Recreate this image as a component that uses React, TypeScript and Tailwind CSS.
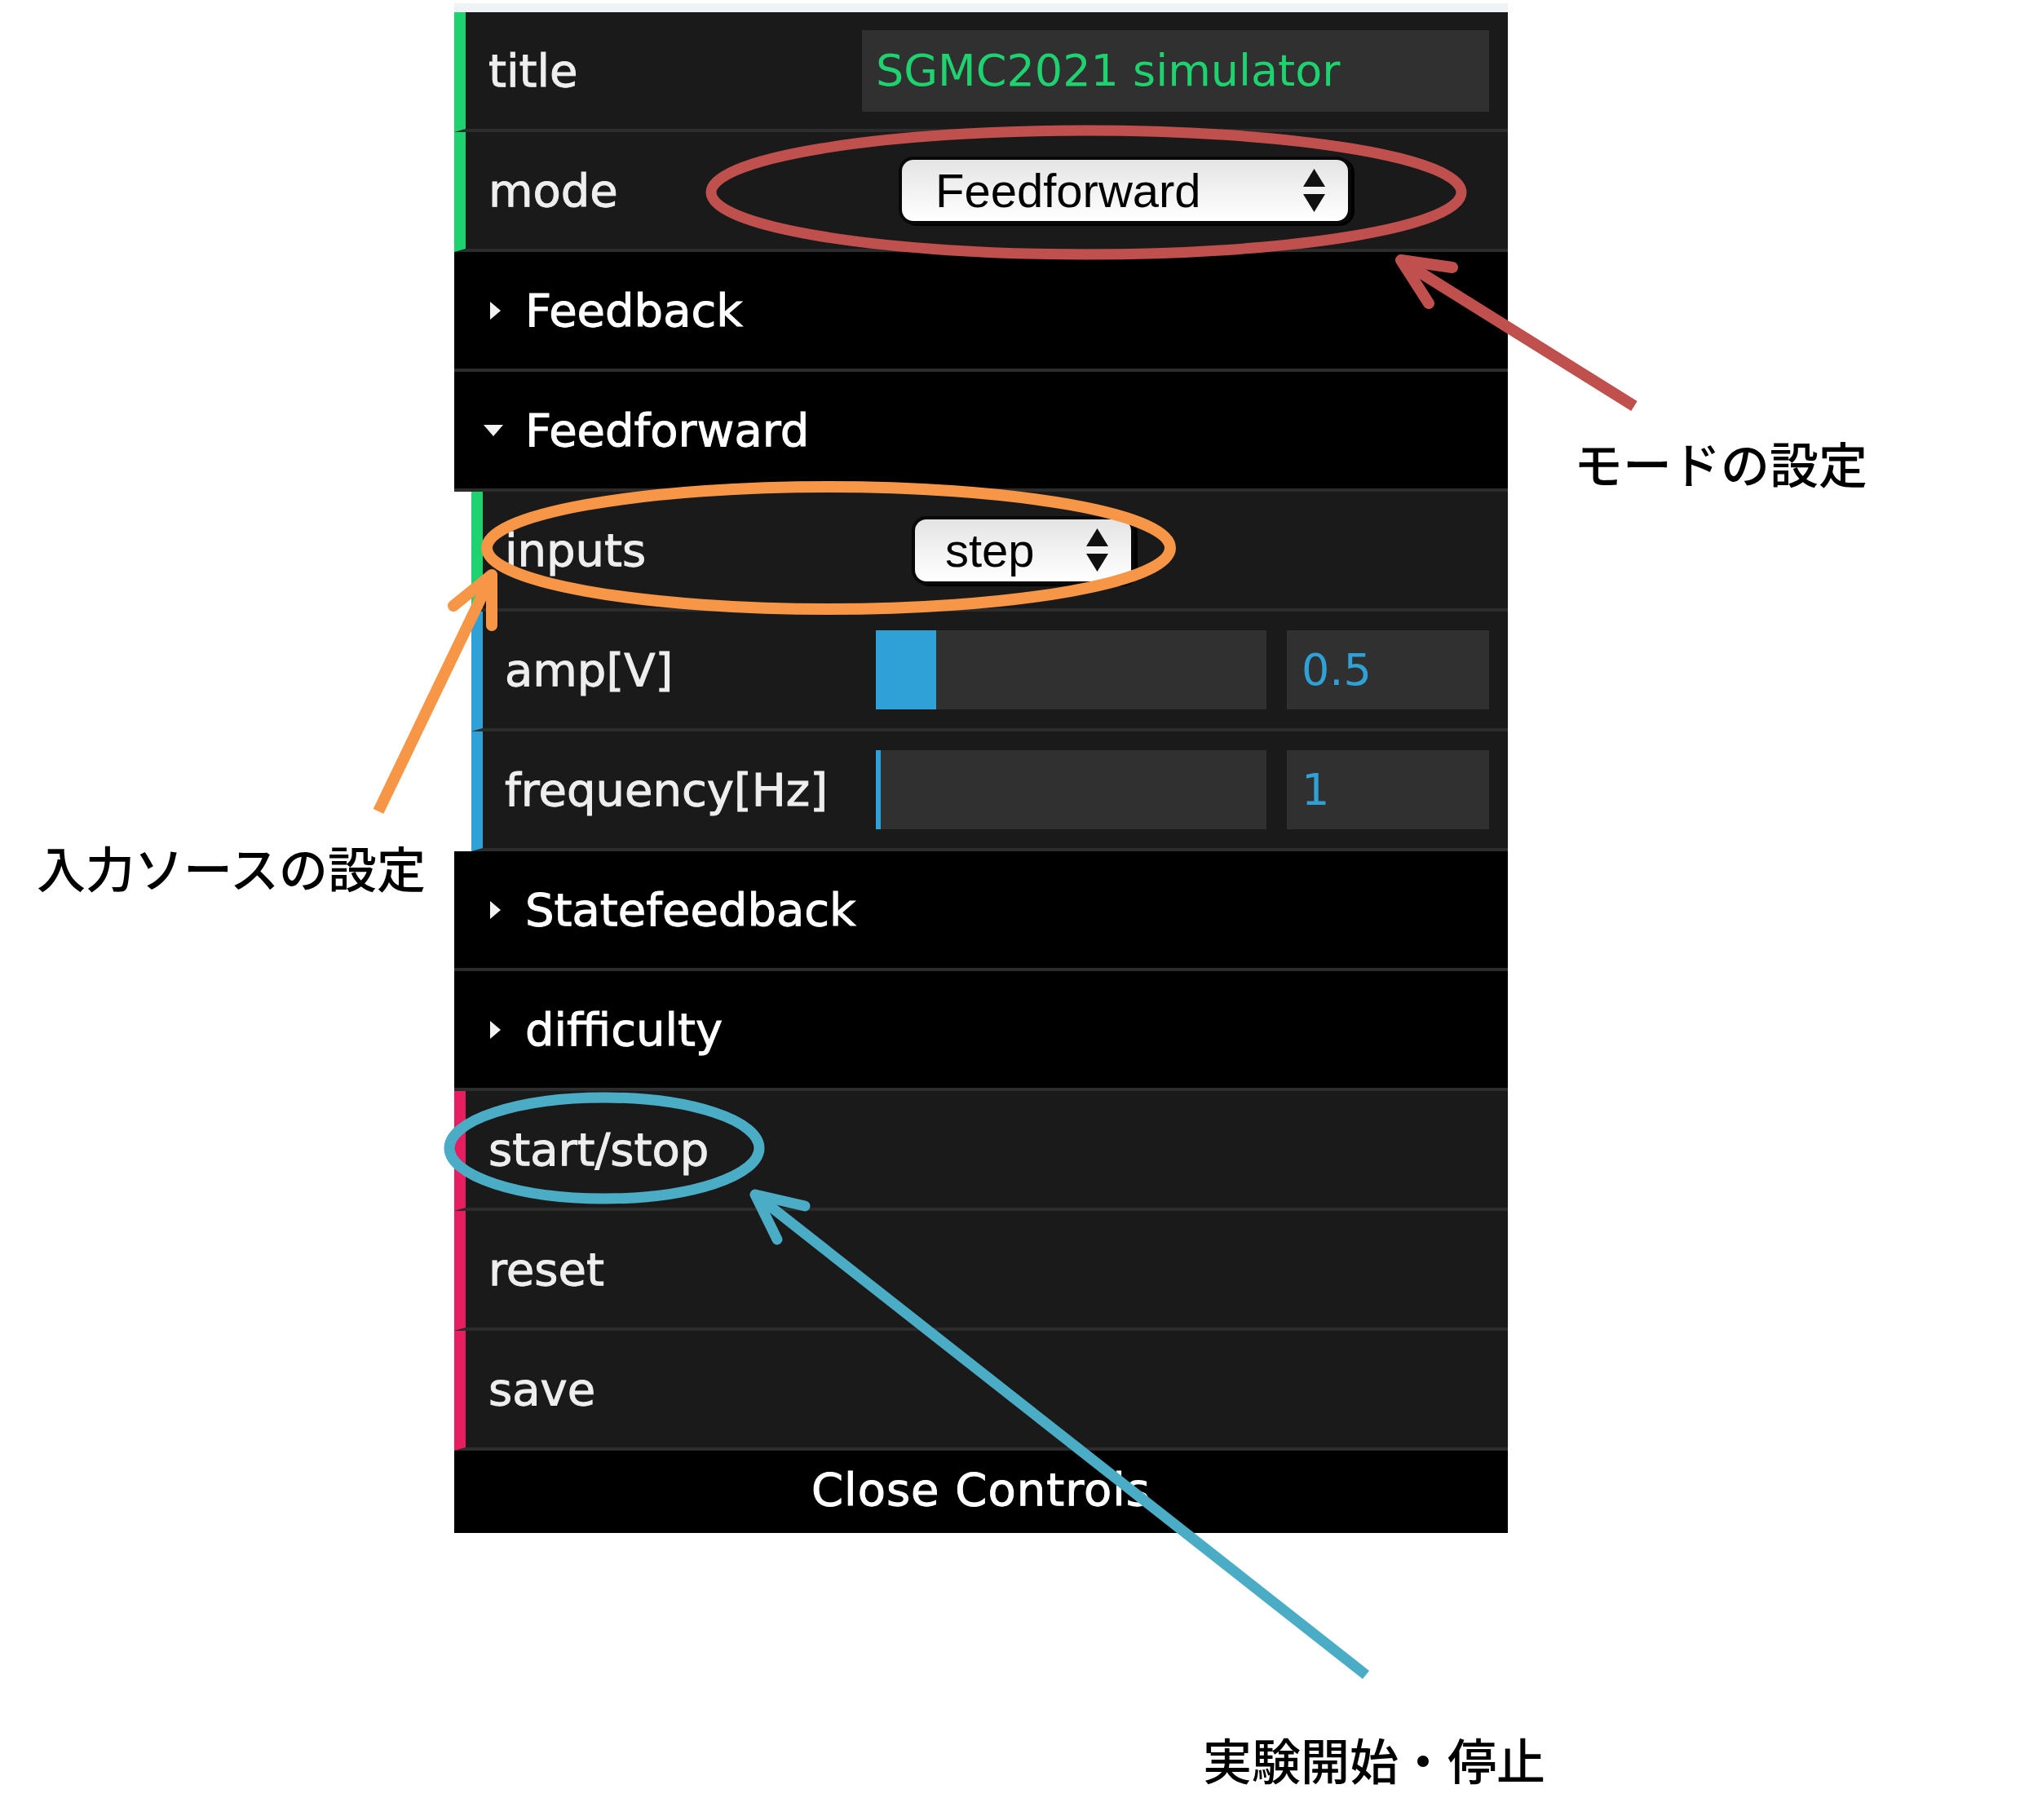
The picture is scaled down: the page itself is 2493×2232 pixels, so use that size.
import React from "react";
import clsx from "clsx";

const GREEN = "border-l-[#1ed36f]";
const BLUE = "border-l-[#2fa1d6]";
const PINK = "border-l-[#e61d5f]";

interface RowProps {
  accent: string;
  nested?: boolean;
  label: string;
  children?: React.ReactNode;
}

const Row: React.FC<RowProps> = ({ accent, nested, label, children }) => (
  <div
    className={clsx(
      "flex h-[147px] items-center border-b-4 border-l-[14px] border-b-[#2c2c2c] bg-[#1a1a1a]",
      accent,
      nested && "ml-[21px]"
    )}
  >
    <div
      className={clsx(
        "shrink-0 leading-[143px] text-[#eeeeee] [-webkit-text-stroke:1px_#eeeeee]",
        nested ? "w-[482px] pl-[27px]" : "w-[486px] pl-[28px]"
      )}
    >
      {label}
    </div>
    <div className="flex flex-1 items-center pr-[23px]">{children}</div>
  </div>
);

const Folder: React.FC<{ title: string; open?: boolean }> = ({ title, open }) => (
  <div className="flex h-[147px] items-center border-b-4 border-b-[#2c2c2c] bg-black text-white">
    <div className={clsx("flex w-[87px] shrink-0", open ? "pl-[36px]" : "pl-[44px]")}>
      {open ? (
        <svg width="24" height="14" viewBox="0 0 24 14">
          <polygon points="0,0 24,0 12,14" fill="#f2f2f2" />
        </svg>
      ) : (
        <svg width="13" height="22" viewBox="0 0 13 22">
          <polygon points="0,0 13,11 0,22" fill="#f2f2f2" />
        </svg>
      )}
    </div>
    <div className="leading-[143px] [-webkit-text-stroke:1px_#ffffff]">{title}</div>
  </div>
);

const Select: React.FC<{ value: string; className: string; textPad: string }> = ({
  value,
  className,
  textPad,
}) => (
  <div
    className={clsx(
      "flex items-center justify-between rounded-[18px] border-[4px] border-[#080808] bg-gradient-to-b from-[#e4e4e4] via-[#f2f2f2] to-[#ffffff] pr-[28px] font-['Liberation_Sans',Arial,sans-serif] text-[58px] text-black shadow-[4px_2px_0_#000]",
      textPad,
      className
    )}
  >
    <span className="leading-none">{value}</span>
    <svg width="27" height="53" viewBox="0 0 27 53">
      <polygon points="0,22 13.5,0 27,22" fill="#111" />
      <polygon points="0,31 27,31 13.5,53" fill="#111" />
    </svg>
  </div>
);

const NumberRow: React.FC<{ label: string; value: string; fill: number }> = ({
  label,
  value,
  fill,
}) => (
  <Row accent={BLUE} nested label={label}>
    <div className="h-[97px] w-[479px] shrink-0 bg-[#303030]">
      <div className="h-full bg-[#2fa1d6]" style={{ width: fill }} />
    </div>
    <div className="ml-[25px] h-[97px] flex-1 bg-[#303030] pl-[18px] text-[54px] leading-[97px] text-[#2fa1d6]">
      {value}
    </div>
  </Row>
);

const Note: React.FC<{ text: string; className: string }> = ({ text, className }) => (
  <div
    className={clsx(
      "absolute whitespace-nowrap font-['Noto_Sans_CJK_JP',sans-serif] text-[60px] font-medium leading-[60px] text-black",
      className
    )}
  >
    {text}
  </div>
);

export default function App() {
  return (
    <div className="relative h-[2232px] w-[2493px] overflow-hidden bg-white">
      <div className="ml-[557px] w-[1292px] pt-[4px] font-['DejaVu_Sans',sans-serif] text-[56px]">
        <div className="h-[11px] bg-[#eff3f6]" />

        <Row accent={GREEN} label="title">
          <div className="h-[100px] flex-1 bg-[#303030] pl-[17px] text-[54px] leading-[100px] text-[#1ed36f]">
            SGMC2021 simulator
          </div>
        </Row>
        <Row accent={GREEN} label="mode">
          <Select value="Feedforward" className="ml-[45px] h-[83px] w-[555px]" textPad="pl-[41px]" />
        </Row>

        <Folder title="Feedback" />
        <Folder title="Feedforward" open />

        <Row accent={GREEN} nested label="inputs">
          <Select value="step" className="ml-[44px] h-[84px] w-[273px]" textPad="pl-[37px]" />
        </Row>
        <NumberRow label="amp[V]" value="0.5" fill={74} />
        <NumberRow label="frequency[Hz]" value="1" fill={6} />

        <Folder title="Statefeedback" />
        <Folder title="difficulty" />

        <Row accent={PINK} label="start/stop" />
        <Row accent={PINK} label="reset" />
        <Row accent={PINK} label="save" />

        <div className="h-[101px] bg-black text-center leading-[95px] tracking-[1px] text-white [-webkit-text-stroke:1px_#ffffff]">
          Close Controls
        </div>
      </div>

      <svg
        className="pointer-events-none absolute left-0 top-0"
        width="2493"
        height="2232"
        viewBox="0 0 2493 2232"
        fill="none"
      >
        {/* mode */}
        <ellipse cx="1332" cy="236" rx="460" ry="76" stroke="#c0504d" strokeWidth="13" />
        <line x1="2004" y1="498" x2="1722" y2="322" stroke="#c0504d" strokeWidth="14" />
        <path
          d="M1781 328 L1718 319 L1752 372"
          stroke="#c0504d"
          strokeWidth="14"
          strokeLinecap="round"
          strokeLinejoin="round"
        />

        {/* inputs */}
        <ellipse cx="1016" cy="672" rx="419" ry="75" stroke="#f79646" strokeWidth="14" />
        <line x1="464" y1="995" x2="601" y2="710" stroke="#f79646" strokeWidth="14" />
        <path
          d="M556 743 L603 705 L603 767"
          stroke="#f79646"
          strokeWidth="14"
          strokeLinecap="round"
          strokeLinejoin="round"
        />

        {/* start/stop */}
        <ellipse cx="741" cy="1408" rx="190" ry="62" stroke="#4bacc6" strokeWidth="13" />
        <line x1="1675" y1="2054" x2="930" y2="1468" stroke="#4bacc6" strokeWidth="13" />
        <path
          d="M987 1479 L926 1465 L953 1520"
          stroke="#4bacc6"
          strokeWidth="13"
          strokeLinecap="round"
          strokeLinejoin="round"
        />
      </svg>

      <Note text="モードの設定" className="left-[1930px] top-[537px]" />
      <Note text="入力ソースの設定" className="left-[45px] top-[1033px]" />
      <Note text="実験開始・停止" className="left-[1475px] top-[2127px]" />
    </div>
  );
}
